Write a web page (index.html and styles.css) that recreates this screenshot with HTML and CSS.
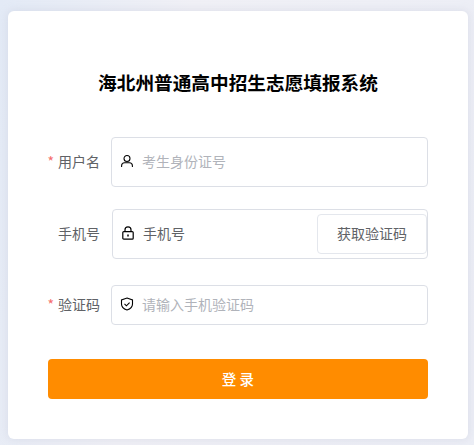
FILE: index.html
```html
<!DOCTYPE html>
<html lang="zh-CN">
<head>
<meta charset="utf-8">
<title>海北州普通高中招生志愿填报系统</title>
<link rel="stylesheet" href="styles.css">
</head>
<body>
<main class="card">
  <h1 class="title">海北州普通高中招生志愿填报系统</h1>
  <form class="form">
    <div class="row row-user">
      <label class="label"><span class="star">*</span>用户名</label>
      <div class="field field-tall">
        <svg class="icon" viewBox="0 0 14 14" fill="none" stroke="#000" stroke-width="1.050"><circle cx="7" cy="4.400" r="3"/><path d="M1.600 13v-1.200c0-1.700 1.300-3 3-3h4.800c1.700 0 3 1.300 3 3V13"/></svg>
        <span class="placeholder">考生身份证号</span>
      </div>
    </div>
    <div class="row row-phone">
      <label class="label">手机号</label>
      <div class="field field-tall">
        <svg class="icon" viewBox="0 0 14 14" fill="none" stroke="#000" stroke-width="1.200"><rect x="1.800" y="5.600" width="10.400" height="7.600" rx="1"/><path d="M4 5.600V3.800a3 3 0 0 1 6 0v1.800"/><path d="M7 8.400v2" stroke-width="1.500"/></svg>
        <span class="value">手机号</span>
        <button class="code-btn" type="button">获取验证码</button>
      </div>
    </div>
    <div class="row row-code">
      <label class="label"><span class="star">*</span>验证码</label>
      <div class="field">
        <svg class="icon" viewBox="0 0 14 14" fill="none" stroke="#000" stroke-width="1.100"><path d="M7 1l5.500 1.900v4c0 2.900-2.300 5-5.500 6.100-3.200-1.100-5.500-3.200-5.500-6.100v-4z"/><path d="M4.500 6.900l1.900 1.900 3.200-3.200"/></svg>
        <span class="placeholder">请输入手机验证码</span>
      </div>
    </div>
    <button class="submit" type="button">登 录</button>
  </form>
</main>
</body>
</html>
```
FILE: styles.css
```css
* { box-sizing: border-box; }
html, body { margin: 0; height: 100%; }
body {
  width: 474px;
  height: 445px;
  overflow: hidden;
  padding: 11px 6px 6px 8px;
  background: linear-gradient(100deg, #e3eaf6 0%, #f0f0f6 35%, #eceef6 100%);
  font-family: "Noto Sans CJK SC", "Noto Sans", sans-serif;
  color: #606266;
}
.card {
  width: 460px;
  height: 428px;
  background: #fff;
  border-radius: 6px;
  box-shadow: 0 0 8px rgba(180, 185, 205, .35);
  padding: 58px 40px 0;
}
.title {
  margin: 0;
  height: 30px;
  font-size: 18.67px;
  line-height: 26px;
  font-weight: 700;
  color: #000;
  text-align: center;
  white-space: nowrap;
}
.form { margin-top: 38px; display: flex; flex-direction: column; }
.row { display: flex; align-items: center; }
.row-phone { margin-top: 22px; }
.row-code { margin-top: 26px; }
.label {
  width: 52px;
  margin-right: 11px;
  padding-bottom: 2px;
  flex: none;
  display: flex;
  justify-content: flex-end;
  font-size: 14px;
  line-height: 20px;
  white-space: nowrap;
  color: #606266;
}
.row-phone .label { margin-right: 12px; }
.star { color: #f56c6c; margin-right: 4px; }
.field {
  flex: 1;
  height: 40px;
  display: flex;
  align-items: center;
  position: relative;
  border: 1px solid #dcdfe6;
  border-radius: 4px;
  padding: 0 0 2px 8px;
  background: #fff;
  font-size: 14px;
}
.field-tall { height: 50px; }
.icon { width: 14px; height: 14px; flex: none; margin-right: 8px; }
.placeholder { color: #b0b3ba; }
.value { color: #606266; }
.code-btn {
  position: absolute;
  right: 0;
  top: 4px;
  width: 110px;
  height: 40px;
  border: 1px solid #e4e7ed;
  border-radius: 4px;
  background: #fff;
  color: #606266;
  font: inherit;
  padding: 0 0 2px;
}
.submit {
  margin-top: 34px;
  width: 380px;
  height: 40px;
  border: 0;
  border-radius: 4px;
  background: #ff8c00;
  color: #fff;
  font: 500 14.5px "Noto Sans CJK SC", "Noto Sans", sans-serif;
  padding: 0 0 2px;
  white-space: pre;
}
```
